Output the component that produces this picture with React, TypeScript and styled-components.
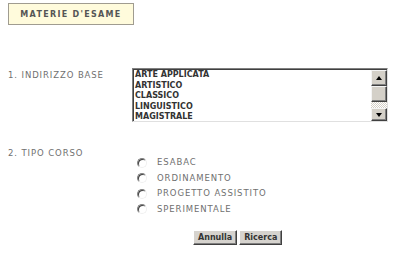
import React from 'react';
import styled, { createGlobalStyle } from 'styled-components';

const GlobalStyle = createGlobalStyle`
  html, body {
    margin: 0;
    padding: 0;
    background: #ffffff;
  }
  body {
    font-family: "DejaVu Sans", Verdana, sans-serif;
  }
`;

const Page = styled.div`
  width: 400px;
  height: 253px;
  padding: 3px 0 0 8px;
  box-sizing: border-box;
  overflow: hidden;
`;

const TitleBox = styled.div`
  width: 126px;
  height: 22px;
  box-sizing: border-box;
  border: 1px solid #a09c90;
  background: #fffbdc;
  display: flex;
  align-items: center;
  justify-content: center;
  font-size: 8px;
  font-weight: bold;
  letter-spacing: 1.3px;
  color: #555555;
`;

const Row = styled.div<{ $top: number }>`
  display: flex;
  margin-top: ${p => p.$top}px;
`;

const Label = styled.div<{ $width?: number }>`
  width: ${p => (p.$width ? `${p.$width}px` : 'auto')};
  padding-top: 2px;
  font-size: 8.5px;
  line-height: 11px;
  letter-spacing: 0.9px;
  color: #707070;
`;

const ListBox = styled.div`
  width: 256px;
  height: 54px;
  box-sizing: border-box;
  border: 1px solid;
  border-color: #808080 #e0e0e0 #e0e0e0 #808080;
  box-shadow: inset 1px 1px 0 #404040;
  display: flex;
  background: #ffffff;
`;

const Options = styled.div`
  flex: 1;
  padding: 1px 0 0 2px;
  overflow: hidden;
`;

const Option = styled.div`
  font-size: 8px;
  font-weight: bold;
  line-height: 10.6px;
  color: #333333;
  white-space: nowrap;
`;

const ScrollBar = styled.div`
  width: 16px;
  display: flex;
  flex-direction: column;
  padding-top: 1px;
`;

const ScrollButton = styled.div<{ $h: number }>`
  height: ${p => p.$h}px;
  box-sizing: border-box;
  background: #d4d0c8;
  border: 1px solid;
  border-color: #f4f4f4 #404040 #404040 #f4f4f4;
  box-shadow: inset -1px -1px 0 #808080;
  display: flex;
  align-items: center;
  justify-content: center;
`;

const Track = styled.div`
  flex: 1;
  background-color: #ffffff;
  background-image: conic-gradient(#d4d0c8 25%, #ffffff 0 50%, #d4d0c8 0 75%, #ffffff 0);
  background-size: 2px 2px;
`;

const Arrow = styled.span<{ $down?: boolean }>`
  width: 0;
  height: 0;
  border-left: 3.5px solid transparent;
  border-right: 3.5px solid transparent;
  ${p => (p.$down ? 'border-top: 4px solid #000;' : 'border-bottom: 4px solid #000;')}
`;

const Section = styled.div`
  margin-top: 24px;
`;

const RadioList = styled.div`
  margin: -4px 0 0 129px;
`;

const RadioRow = styled.label`
  height: 15.5px;
  line-height: 15.5px;
  display: flex;
  align-items: center;
  gap: 10px;
  font-size: 8.5px;
  letter-spacing: 0.9px;
  color: #707070;
`;

const RadioDot = styled.span`
  width: 10px;
  height: 10px;
  box-sizing: border-box;
  border-radius: 50%;
  border: 1px solid;
  border-color: #808080 #f0f0f0 #f0f0f0 #808080;
  box-shadow: inset 1px 1px 0 #404040;
  background: #ffffff;
`;

const Buttons = styled.div`
  display: flex;
  gap: 2px;
  margin: 13px 0 0 185px;
`;

const Button = styled.button`
  height: 15px;
  padding: 0 4px;
  box-sizing: border-box;
  background: #d6d3ce;
  border: 1px solid;
  border-color: #ffffff #404040 #404040 #ffffff;
  box-shadow: inset -1px -1px 0 #808080;
  font-family: "DejaVu Sans", Verdana, sans-serif;
  font-size: 8px;
  font-weight: bold;
  color: #333333;
  line-height: 1;
`;

const indirizzi = ['ARTE APPLICATA', 'ARTISTICO', 'CLASSICO', 'LINGUISTICO', 'MAGISTRALE'];
const corsi = ['ESABAC', 'ORDINAMENTO', 'PROGETTO ASSISTITO', 'SPERIMENTALE'];

export default function App() {
  return (
    <>
      <GlobalStyle />
      <Page>
        <TitleBox>MATERIE D'ESAME</TitleBox>

        <Row $top={43}>
          <Label $width={124}>1. INDIRIZZO BASE</Label>
          <ListBox>
            <Options>
              {indirizzi.map(name => (
                <Option key={name}>{name}</Option>
              ))}
            </Options>
            <ScrollBar>
              <ScrollButton $h={16}>
                <Arrow />
              </ScrollButton>
              <ScrollButton $h={16} />
              <Track />
              <ScrollButton $h={13}>
                <Arrow $down />
              </ScrollButton>
            </ScrollBar>
          </ListBox>
        </Row>

        <Section>
          <Label>2. TIPO CORSO</Label>
          <RadioList>
            {corsi.map(name => (
              <RadioRow key={name}>
                <RadioDot />
                {name}
              </RadioRow>
            ))}
          </RadioList>
        </Section>

        <Buttons>
          <Button>Annulla</Button>
          <Button>Ricerca</Button>
        </Buttons>
      </Page>
    </>
  );
}
